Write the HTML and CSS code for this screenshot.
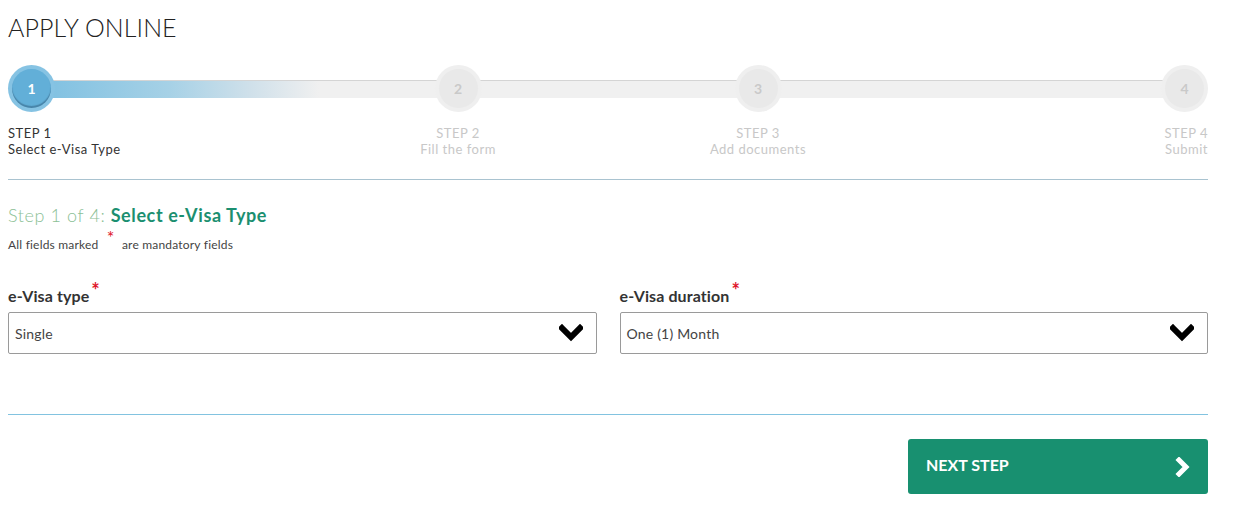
FILE: index.html
```html
<!DOCTYPE html>
<html lang="en">
<head>
<meta charset="utf-8">
<title>Apply Online</title>
<link rel="stylesheet" href="styles.css">
</head>
<body>
<div class="page">
  <h1 class="title">APPLY ONLINE</h1>

  <div class="wizard">
    <div class="track"></div>
    <div class="step step-first active">
      <div class="circle"><span>1</span></div>
      <div class="step-label">STEP 1<br>Select e-Visa Type</div>
    </div>
    <div class="step step-mid">
      <div class="circle"><span>2</span></div>
      <div class="step-label">STEP 2<br>Fill the form</div>
    </div>
    <div class="step step-mid">
      <div class="circle"><span>3</span></div>
      <div class="step-label">STEP 3<br>Add documents</div>
    </div>
    <div class="step step-last">
      <div class="circle"><span>4</span></div>
      <div class="step-label">STEP 4<br>Submit</div>
    </div>
  </div>

  <hr class="rule rule-grey">

  <h2 class="form-title"><span class="light">Step 1 of 4:</span> <span class="bold">Select e-Visa Type</span></h2>
  <p class="note">All fields marked <span class="req">*</span> are mandatory fields</p>

  <div class="fields">
    <div class="field">
      <label class="field-label">e-Visa type<span class="req">*</span></label>
      <div class="select">
        <span class="value">Single</span>
        <svg class="chev" width="24" height="18" viewBox="0 0 24 18"><polyline points="3,4 12,13 21,4" fill="none" stroke="#000" stroke-width="6" stroke-linejoin="miter" stroke-linecap="square"/></svg>
      </div>
    </div>
    <div class="field">
      <label class="field-label">e-Visa duration<span class="req">*</span></label>
      <div class="select">
        <span class="value">One (1) Month</span>
        <svg class="chev" width="24" height="18" viewBox="0 0 24 18"><polyline points="3,4 12,13 21,4" fill="none" stroke="#000" stroke-width="6" stroke-linejoin="miter" stroke-linecap="square"/></svg>
      </div>
    </div>
  </div>

  <hr class="rule rule-blue">

  <div class="actions">
    <button class="next" type="button">
      <span>NEXT STEP</span>
      <svg width="16" height="20" viewBox="0 0 16 20"><polyline points="4,3 11,10 4,17" fill="none" stroke="#fff" stroke-width="5" stroke-linejoin="miter" stroke-linecap="square"/></svg>
    </button>
  </div>
</div>
</body>
</html>
```

FILE: styles.css
```css
* { box-sizing: border-box; }
body {
  margin: 0;
  background: #fff;
  font-family: Lato, "Open Sans", "Liberation Sans", sans-serif;
  color: #333;
}
.page {
  width: 1200px;
  margin-left: 8px;
}
.title {
  margin: 12px 0 0;
  font-size: 25px;
  line-height: 30px;
  font-weight: 300;
  color: #222;
  letter-spacing: 0.1px;
}

.wizard {
  position: relative;
  display: grid;
  grid-template-columns: repeat(4, 1fr);
  margin-top: 23px;
}
.track {
  position: absolute;
  left: 23px;
  right: 25px;
  top: 15px;
  height: 18px;
  background: linear-gradient(to right, #7cbfe1 0%, #a6d1e6 12%, #cfe0ea 19%, #f0f0f0 25%, #f0f0f0 100%);
  border-top: 1px solid #d4d4d4;
}
.step {
  position: relative;
  display: flex;
  flex-direction: column;
}
.step-first { align-items: flex-start; }
.step-mid { align-items: center; text-align: center; }
.step-last { align-items: flex-end; text-align: right; }

.circle {
  width: 47px;
  height: 47px;
  border-radius: 50%;
  background: #efefef;
  display: flex;
  align-items: center;
  justify-content: center;
}
.circle span {
  width: 39px;
  height: 39px;
  border-radius: 50%;
  background: #e9e9e9;
  display: flex;
  align-items: center;
  justify-content: center;
  font-size: 14px;
  font-weight: 700;
  color: #c9c9c9;
}
.active .circle { background: #86c3e3; }
.active .circle span {
  background: #62afd8;
  color: #fff;
  box-shadow: inset 0 -2px 1px rgba(40, 80, 110, 0.45);
}
.step-label {
  margin-top: 13px;
  font-size: 13px;
  line-height: 16px;
  letter-spacing: 0.5px;
  color: #c8c8c8;
}
.active .step-label { color: #333; }

.rule {
  border: 0;
  height: 0;
  margin: 0;
}
.rule-grey {
  margin-top: 22px;
  border-top: 1px solid #a9c3d0;
}
.rule-blue {
  margin-top: 60px;
  border-top: 1px solid #82c3e0;
}

.form-title {
  margin: 24px 0 0;
  font-size: 18px;
  line-height: 22px;
  font-weight: 400;
  letter-spacing: 0.6px;
}
.form-title .light { color: #8cbf96; font-weight: 300; }
.form-title .bold { color: #1b8f70; font-weight: 700; }

.note {
  margin: 11px 0 0;
  font-size: 12px;
  line-height: 16px;
  letter-spacing: 0.2px;
  color: #444;
}
.req {
  color: #e0162b;
  font-size: 18px;
  line-height: 0;
  position: relative;
  top: -5px;
  margin: 0 4px 0 5px;
}

.fields {
  margin-top: 33px;
  display: grid;
  grid-template-columns: 1fr 1fr;
  column-gap: 23px;
}
.field-label {
  display: block;
  font-size: 16px;
  font-weight: 700;
  line-height: 20px;
  letter-spacing: 0.1px;
  color: #333;
}
.field-label .req {
  font-size: 20px;
  margin: 0 0 0 2px;
  top: -4px;
}
.select {
  margin-top: 6px;
  height: 42px;
  border: 1px solid #9a9a9a;
  border-radius: 2px;
  display: flex;
  align-items: center;
  justify-content: space-between;
  padding: 0 13px 0 6px;
}
.value {
  font-size: 14px;
  letter-spacing: 0.2px;
  color: #444;
}
.chev { display: block; }

.actions {
  margin-top: 24px;
  display: flex;
  justify-content: flex-end;
}
.next {
  width: 300px;
  height: 55px;
  background: #189070;
  border: 0;
  border-radius: 3px;
  color: #fff;
  font-family: Lato, "Liberation Sans", sans-serif;
  font-size: 16px;
  font-weight: 700;
  display: flex;
  align-items: center;
  justify-content: space-between;
  padding: 0 17px 5px 18px;
  cursor: pointer;
}
.next svg { display: block; margin-top: 5px; }
```
